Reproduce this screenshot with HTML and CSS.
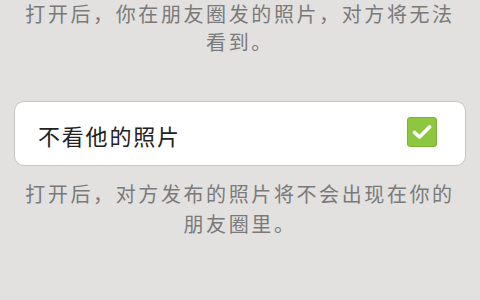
FILE: index.html
```html
<!DOCTYPE html>
<html lang="zh-CN">
<head>
    <meta charset="UTF-8">
    <meta name="viewport" content="width=device-width, initial-scale=1.0">
    <title>朋友圈权限</title>
    <link rel="stylesheet" href="styles.css">
</head>
<body>
    <div class="page">
        <p class="tip tip-top">打开后，你在朋友圈发的照片，对方将无法看到。</p>

        <div class="option">
            <span class="option-label">不看他的照片</span>
            <span class="check">
                <svg width="20" height="16" viewBox="0 0 20 16">
                    <path d="M2.5 8.5 L7.5 13 L17.5 3" fill="none" stroke="#fff" stroke-width="3.6" stroke-linecap="round" stroke-linejoin="round"/>
                </svg>
            </span>
        </div>
        <p class="tip">打开后，对方发布的照片将不会出现在你的朋友圈里。</p>
    </div>
</body>
</html>
```

FILE: styles.css
```css
body {
    margin: 0;
    background-color: #e2e1df;
    font-family: "Noto Sans CJK SC", "Noto Sans", sans-serif;
    overflow: hidden;
}
.page {
    height: 300px;
    padding: 0 14px;
}
.tip {
    margin: 0;
    padding: 0 8px;
    color: #7a7a7a;
    font-size: 20px;
    line-height: 30px;
    letter-spacing: 2.6px;
    text-align: center;
}
.tip-top {
    line-height: 28px;
    margin-bottom: 45px;
}
.option {
    display: flex;
    align-items: center;
    justify-content: space-between;
    height: 63px;
    padding: 0 28px 0 23px;
    background-color: #fff;
    border: 1px solid #c6c6c6;
    border-radius: 10px;
    margin-bottom: 13px;
}
.option-label {
    color: #222;
    font-size: 22px;
    letter-spacing: 1.8px;
    margin-top: 2px;
}
.check {
    display: flex;
    align-items: center;
    justify-content: center;
    width: 28px;
    height: 28px;
    background-color: #8dc63f;
    border: 1px solid #7cb335;
    border-radius: 3px;
    margin-top: -3px;
}
```
